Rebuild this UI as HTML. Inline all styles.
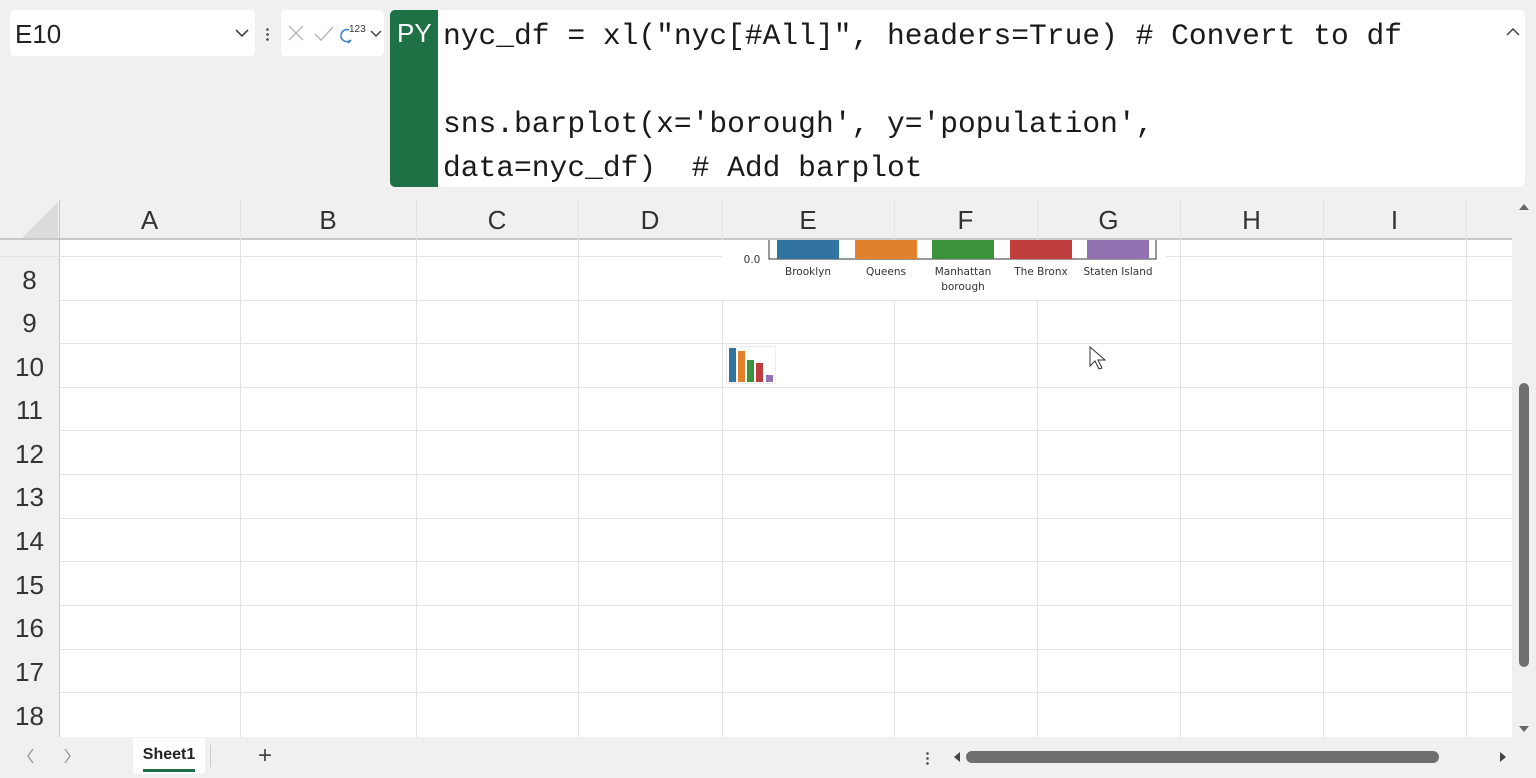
<!DOCTYPE html>
<html><head><style>
*{margin:0;padding:0;box-sizing:border-box}
body{width:1536px;height:778px;background:#f0f0f0;position:relative;overflow:hidden;font-family:"Liberation Sans",sans-serif}
.abs{position:absolute}
.namebox{left:10px;top:10px;width:245px;height:46px;background:#fff;border-radius:4px;font-size:26px;color:#222;padding:9px 0 0 5px}
.fbtns{left:281px;top:10px;width:103px;height:46px;background:#fff;border-radius:4px}
.py{left:390px;top:10px;width:48px;height:177px;background:#1e7145;border-radius:5px 0 0 5px;color:#fff;font-size:26px;padding:8px 0 0 7px}
.code{left:438px;top:10px;width:1087px;height:177px;background:#fff;border-radius:0 5px 5px 0;font-family:"Liberation Mono",monospace;font-size:29.6px;color:#1a1a1a;line-height:44px;padding:4px 0 0 5px;white-space:pre}
.grid{left:0;top:200px;width:1512px;height:537px;background:#fff;overflow:hidden}
.colh{top:0;height:40px;background:#f0f0f0;border-bottom:2px solid #c8c8c8;font-size:26px;color:#333;text-align:center;line-height:40px}
.rowh{left:0;width:59px;background:#f0f0f0;font-size:26px;color:#333;text-align:center}
.vl{top:0;width:1px;height:537px;background:#e3e3e3}
.hl{left:0;width:1512px;height:1px;background:#e3e3e3}
</style></head><body>
<div class="abs namebox">E10<svg class="abs" style="left:225px;top:19px" width="14" height="9"><path d="M1 1l6 6 6-6" stroke="#444" stroke-width="1.6" fill="none"/></svg></div>
<div class="abs" style="left:266px;top:27px;width:3px;height:14px;background:radial-gradient(circle,#555 1.2px,transparent 1.5px) 0 0/3px 5px"></div>
<div class="abs fbtns"><svg width="103" height="46"><path d="M8 16l14 14M22 16l-14 14" stroke="#bbb" stroke-width="1.5"/><path d="M34 24l6 6 12-13" stroke="#bbb" stroke-width="1.5" fill="none"/><path d="M68 20a6 6 0 1 0 2 10l-3 3" stroke="#3b82c4" stroke-width="1.6" fill="none"/><text x="68" y="22" font-size="10" fill="#333" font-family="Liberation Sans">123</text><path d="M90 21l5 5 5-5" stroke="#444" stroke-width="1.5" fill="none"/></svg></div>
<div class="abs py">PY</div>
<div class="abs code">nyc_df = xl("nyc[#All]", headers=True) # Convert to df

sns.barplot(x='borough', y='population',
data=nyc_df)  # Add barplot</div>
<svg class="abs" style="left:1506px;top:28px" width="14" height="9"><path d="M1 7l6-6 6 6" stroke="#444" stroke-width="1.5" fill="none"/></svg>
<div class="abs grid">
<div class="abs" style="left:0;top:0;width:1512px;height:40px;background:#f0f0f0;border-bottom:2px solid #c8c8c8"></div>
<svg class="abs" style="left:18px;top:0" width="42" height="40"><path d="M40 2v36H4z" fill="#dcdcdc"/></svg>
<div class="abs colh" style="left:59px;width:181px">A</div>
<div class="abs colh" style="left:240px;width:176px">B</div>
<div class="abs colh" style="left:416px;width:162px">C</div>
<div class="abs colh" style="left:578px;width:144px">D</div>
<div class="abs colh" style="left:722px;width:172px">E</div>
<div class="abs colh" style="left:894px;width:143px">F</div>
<div class="abs colh" style="left:1037px;width:143px">G</div>
<div class="abs colh" style="left:1180px;width:143px">H</div>
<div class="abs colh" style="left:1323px;width:143px">I</div>
<div class="abs" style="left:0;top:40px;width:59px;height:497px;background:#f0f0f0"></div>
<div class="abs vl" style="left:59px;background:#c8c8c8"></div>
<div class="abs vl" style="left:240px"></div><div class="abs vl" style="left:416px"></div><div class="abs vl" style="left:578px"></div><div class="abs vl" style="left:722px"></div><div class="abs vl" style="left:894px"></div><div class="abs vl" style="left:1037px"></div><div class="abs vl" style="left:1180px"></div><div class="abs vl" style="left:1323px"></div><div class="abs vl" style="left:1466px"></div>
<div class="abs hl" style="top:56px"></div><div class="abs hl" style="top:100px"></div><div class="abs hl" style="top:143px"></div><div class="abs hl" style="top:187px"></div><div class="abs hl" style="top:230px"></div><div class="abs hl" style="top:274px"></div><div class="abs hl" style="top:318px"></div><div class="abs hl" style="top:361px"></div><div class="abs hl" style="top:405px"></div><div class="abs hl" style="top:449px"></div><div class="abs hl" style="top:492px"></div>
<div class="abs rowh" style="top:58px;height:44px;line-height:44px">8</div>
<div class="abs rowh" style="top:101px;height:44px;line-height:44px">9</div>
<div class="abs rowh" style="top:145px;height:44px;line-height:44px">10</div>
<div class="abs rowh" style="top:188px;height:44px;line-height:44px">11</div>
<div class="abs rowh" style="top:232px;height:44px;line-height:44px">12</div>
<div class="abs rowh" style="top:275px;height:44px;line-height:44px">13</div>
<div class="abs rowh" style="top:319px;height:44px;line-height:44px">14</div>
<div class="abs rowh" style="top:363px;height:44px;line-height:44px">15</div>
<div class="abs rowh" style="top:406px;height:44px;line-height:44px">16</div>
<div class="abs rowh" style="top:450px;height:44px;line-height:44px">17</div>
<div class="abs rowh" style="top:494px;height:44px;line-height:44px">18</div>
<svg class="abs" style="left:722px;top:40px" width="444" height="60"><rect width="444" height="60" fill="#fff"/>
<path d="M47 0v19h387V0" stroke="#333" fill="none"/>
<rect x="55" y="0" width="62" height="19" fill="#3274a1"/><rect x="133" y="0" width="62" height="19" fill="#e1812c"/><rect x="210" y="0" width="62" height="19" fill="#3a923a"/><rect x="288" y="0" width="62" height="19" fill="#c03d3e"/><rect x="365" y="0" width="62" height="19" fill="#9372b2"/>
<g font-family="DejaVu Sans,sans-serif" font-size="10.5" fill="#333" text-anchor="middle"><text x="30" y="23">0.0</text><text x="86" y="35">Brooklyn</text><text x="164" y="35">Queens</text><text x="241" y="35">Manhattan</text><text x="241" y="50">borough</text><text x="319" y="35">The Bronx</text><text x="396" y="35">Staten Island</text></g></svg>
<svg class="abs" style="left:726px;top:146px" width="50" height="38"><rect width="50" height="38" fill="#fff" stroke="#ddd"/><rect x="3" y="2" width="7" height="34" fill="#3274a1"/><rect x="12" y="5" width="7" height="31" fill="#e1812c"/><rect x="21" y="14" width="7" height="22" fill="#3a923a"/><rect x="30" y="17" width="7" height="19" fill="#c03d3e"/><rect x="40" y="29" width="7" height="7" fill="#9372b2"/></svg>
<svg class="abs" style="left:1089px;top:146px" width="18" height="24"><path d="M1 1v19l5-5 4 8 3-1-4-8h7z" fill="#fff" stroke="#333"/></svg>
</div>
<div class="abs" style="left:1513px;top:196px;width:23px;height:544px;background:#f0f0f0"></div>
<svg class="abs" style="left:1518px;top:202px" width="12" height="10"><path d="M1 8l5-6 5 6z" fill="#666"/></svg>
<div class="abs" style="left:1519px;top:383px;width:10px;height:284px;background:#6e6e6e;border-radius:5px"></div>
<svg class="abs" style="left:1518px;top:724px" width="12" height="10"><path d="M1 2l5 6 5-6z" fill="#666"/></svg>
<svg class="abs" style="left:20px;top:746px" width="60" height="20"><path d="M13 3l-5 7 5 7M45 3l5 7-5 7" stroke="#999" stroke-width="1.3" fill="none"/></svg>
<div class="abs" style="left:133px;top:738px;width:72px;height:36px;background:#fff;border-radius:0 0 4px 4px;font-size:16px;font-weight:bold;color:#222;text-align:center;padding-top:8px">Sheet1<div style="margin:5px auto 0;width:52px;height:3px;background:#1e7145"></div></div>
<div class="abs" style="left:210px;top:745px;width:1px;height:22px;background:#ccc"></div>
<div class="abs" style="left:258px;top:742px;font-size:24px;color:#444">+</div>
<div class="abs" style="left:926px;top:751px;width:3px;height:14px;background:radial-gradient(circle,#555 1.2px,transparent 1.5px) 0 0/3px 5px"></div>
<svg class="abs" style="left:950px;top:750px" width="560" height="14"><path d="M10 2l-6 5 6 5z" fill="#444"/><path d="M550 2l6 5-6 5z" fill="#444"/></svg>
<div class="abs" style="left:966px;top:751px;width:473px;height:12px;background:#6e6e6e;border-radius:6px"></div>
</body></html>
